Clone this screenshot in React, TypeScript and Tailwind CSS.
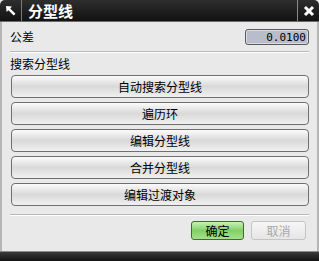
import React from "react";

const cjk = { fontFamily: '"Noto Sans CJK SC", "Noto Sans", sans-serif' };

const actions = ["自动搜索分型线", "遍历环", "编辑分型线", "合并分型线", "编辑过渡对象"];

const App = () => {
  return (
    <div className="w-[319px] h-[261px] flex flex-col bg-[#e9e9e9] overflow-hidden" style={cjk}>
      {/* title bar */}
      <div className="h-[22px] flex items-stretch rounded-t-[5px] bg-gradient-to-b from-[#2e2e2e] to-[#121212] border-b border-[#6a6a6a]">
        <div className="w-[22px] flex items-center justify-center border-r border-[#7a7a7a]">
          <svg width="12" height="12" viewBox="0 0 12 12">
            <path d="M1 1 L7 1.6 L5.2 3.4 L10.5 8.7 L8.7 10.5 L3.4 5.2 L1.6 7 Z" fill="#fff" />
          </svg>
        </div>
        <div className="flex-1 flex items-center pl-[6px] text-white text-[15px] font-bold leading-none">分型线</div>
        <div className="w-[22px] flex items-center justify-center border-l border-[#8a8a8a]">
          <svg width="12" height="12" viewBox="0 0 12 12">
            <path d="M2 2 L10 10 M10 2 L2 10" stroke="#fff" strokeWidth="3" />
          </svg>
        </div>
      </div>

      {/* body */}
      <div className="flex-1 flex flex-col border-x-2 border-[#b5b5b5] px-[8px]">
        <div className="h-[29px] flex items-center justify-between">
          <span className="text-[12px] text-black">公差</span>
          <div className="w-[64px] h-[16px] mt-[1px] rounded-[3px] border border-[#5a5a5a] bg-[#b9bdcb] shadow-[inset_0_0_0_1px_#d8dbe4] flex items-center justify-end overflow-hidden pr-[2px]">
            <span className="text-[11px] text-black leading-none whitespace-nowrap" style={{ fontFamily: '"DejaVu Sans Mono", monospace' }}>
              0.0100
            </span>
          </div>
        </div>
        <div className="border-t border-[#b8b8b8] border-b border-b-white" />
        <div className="h-[22px] flex items-center text-[12px] text-black">搜索分型线</div>
        <div className="flex flex-col gap-[4px] pl-[1px]">
          {actions.map((a) => (
            <button
              key={a}
              className="h-[23px] w-full rounded-[4px] border border-[#6f6f6f] bg-gradient-to-b from-[#fbfbfb] via-[#d9d9d9] to-[#f0f0f0] text-[12px] text-black leading-none"
            >
              {a}
            </button>
          ))}
        </div>
        <div className="mt-[8px] border-t border-[#b8b8b8] border-b border-b-white" />
        <div className="flex justify-end gap-[7px] mt-[5px] pr-[3px]">
          <button className="w-[53px] h-[19px] rounded-[3px] border border-[#3b6e2a] bg-gradient-to-b from-[#c9f0b6] via-[#7fd064] to-[#a6e08e] text-[12px] text-black leading-none">
            确定
          </button>
          <button className="w-[55px] h-[19px] rounded-[3px] border border-[#c4c4c4] bg-gradient-to-b from-[#f6f6f6] to-[#e6e6e6] text-[12px] text-[#a8a8a8] leading-none">
            取消
          </button>
        </div>
      </div>

      {/* bottom edge */}
      <div className="h-[10px] bg-gradient-to-b from-[#3a3a3a] to-[#141414] border-t border-[#8a8a8a]" />
    </div>
  );
};

export default App;
